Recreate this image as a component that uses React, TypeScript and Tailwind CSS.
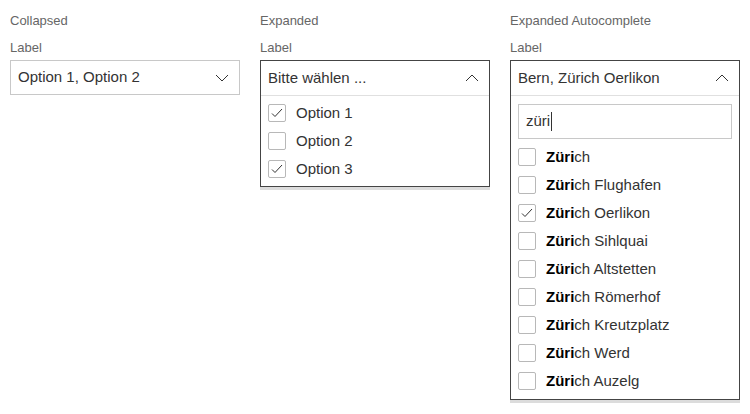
import React from 'react'

const ChevronDown = () => (
  <svg width="14" height="8" viewBox="0 0 14 8" fill="none" className="shrink-0">
    <path d="M1 1l6 6 6-6" stroke="#333" strokeWidth="1" />
  </svg>
)

const ChevronUp = () => (
  <svg width="14" height="8" viewBox="0 0 14 8" fill="none" className="shrink-0">
    <path d="M1 7l6-6 6 6" stroke="#333" strokeWidth="1" />
  </svg>
)

const Checkbox = ({ checked }: { checked?: boolean }) => (
  <span className="flex h-[18px] w-[18px] shrink-0 items-center justify-center rounded-[2px] border border-[#b8b8b8] bg-white">
    {checked && (
      <svg width="12" height="10" viewBox="0 0 12 10" fill="none">
        <path d="M1 5.5l3 3L11 1" stroke="#333" strokeWidth="1" />
      </svg>
    )}
  </span>
)

const Option = ({ checked, children }: { checked?: boolean; children: React.ReactNode }) => (
  <div className="flex h-[28px] items-center gap-[10px] px-[7px]">
    <Checkbox checked={checked} />
    <span className="pt-[1px] text-[15px] text-[#333]">{children}</span>
  </div>
)

const Column = ({ title, children }: { title: string; children: React.ReactNode }) => (
  <div className="flex w-[230px] flex-col">
    <div className="h-[14px] text-[13px] leading-[14px] text-[#666]">{title}</div>
    <div className="mt-[13px] h-[14px] text-[13px] leading-[14px] text-[#666]">Label</div>
    <div className="mt-[5px]">{children}</div>
  </div>
)

const places = ['', ' Flughafen', ' Oerlikon', ' Sihlquai', ' Altstetten', ' Römerhof', ' Kreutzplatz', ' Werd', ' Auzelg']

export default function App() {
  return (
    <div className="flex gap-[20px] bg-white px-[10px] pt-[14px] font-['Liberation_Sans',Arial,sans-serif]" style={{ height: 414 }}>
      <Column title="Collapsed">
        <div className="flex h-[35px] items-center justify-between border border-[#c8c8c8] bg-white pl-[7px] pr-[10px]">
          <span className="text-[15px] text-[#333]">Option 1, Option 2</span>
          <ChevronDown />
        </div>
      </Column>

      <Column title="Expanded">
        <div className="border border-[#444] bg-white shadow-[0_3px_0_#dcdcdc]">
          <div className="flex h-[35px] items-center justify-between border-b border-[#e0e0e0] pl-[7px] pr-[10px]">
            <span className="text-[15px] text-[#333]">Bitte wählen ...</span>
            <ChevronUp />
          </div>
          <div className="pb-[3px] pt-[3px]">
            <Option checked>Option 1</Option>
            <Option>Option 2</Option>
            <Option checked>Option 3</Option>
          </div>
        </div>
      </Column>

      <Column title="Expanded Autocomplete">
        <div className="border border-[#444] bg-white shadow-[0_3px_0_#dcdcdc]">
          <div className="flex h-[35px] items-center justify-between border-b border-[#e0e0e0] pl-[7px] pr-[10px]">
            <span className="text-[15px] text-[#333]">Bern, Zürich Oerlikon</span>
            <ChevronUp />
          </div>
          <div className="px-[7px] pt-[8px]">
            <div className="flex h-[35px] items-center border border-[#c8c8c8] px-[7px]">
              <span className="text-[15px] text-[#333]">züri</span>
              <span className="ml-[1px] h-[19px] w-px bg-[#333]" />
            </div>
          </div>
          <div className="pb-[4px] pt-[4px]">
            {places.map((p, i) => (
              <Option key={i} checked={i === 2}>
                <b className="font-bold text-black">Züri</b>ch{p}
              </Option>
            ))}
          </div>
        </div>
      </Column>
    </div>
  )
}
